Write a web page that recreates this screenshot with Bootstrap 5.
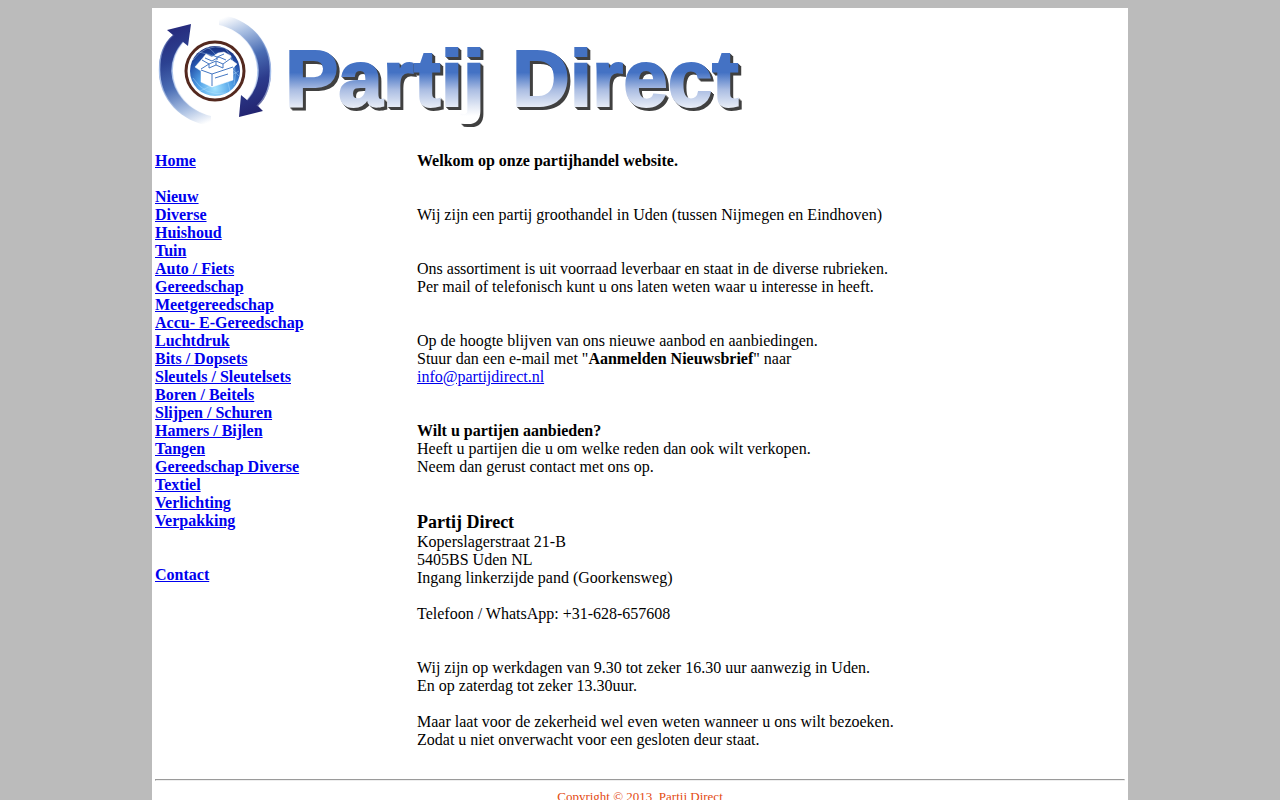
<!DOCTYPE html>
<html lang="nl">
<head>
<meta charset="utf-8">
<meta name="viewport" content="width=device-width, initial-scale=1">
<title>Partij Direct</title>
<link href="https://cdn.jsdelivr.net/npm/bootstrap@5.3.0/dist/css/bootstrap.min.css" rel="stylesheet">
<style>
body { background: #bbb; color: #000; font: 16px/18px "Liberation Serif", "Times New Roman", serif; }
a { color: #00e; }
.sheet { max-width: 976px; padding: 3px; }
.logo { width: 600px; max-width: 100%; height: auto; }
.side { width: 262px; }
.gap-line { margin-bottom: 18px; }
.gap-lines { margin-bottom: 36px; }
.firm { font-size: 18px; line-height: 21px; font-weight: bold; }
.rule { border: 1px solid; border-color: #9a9a9a #eee #eee #9a9a9a; opacity: 1; margin: 30px 0 8px; }
.copy { color: #e34a12; font-size: 13px; line-height: 15px; padding-bottom: 12px; }
.word { font: bold 80px "Liberation Sans", Arial, sans-serif; filter: drop-shadow(1px 1px 0 #404040) drop-shadow(2px 2px 0 #404040); }
</style>
</head>
<body>
<main class="sheet container-fluid bg-white mt-2">
<header>
<svg class="logo d-block" viewBox="155 11 600 141" role="img" aria-label="Partij Direct">
  <defs>
    <linearGradient id="face" gradientUnits="userSpaceOnUse" x1="0" y1="46" x2="0" y2="116">
      <stop offset="0" stop-color="#4472c4"/><stop offset=".38" stop-color="#4472c4"/>
      <stop offset=".62" stop-color="#a9bce2"/><stop offset=".86" stop-color="#e3e9f5"/><stop offset="1" stop-color="#fff"/>
    </linearGradient>
    <linearGradient id="up" gradientUnits="userSpaceOnUse" x1="172" y1="28" x2="210" y2="122">
      <stop offset="0" stop-color="#262a7c"/><stop offset=".3" stop-color="#2c4292"/><stop offset=".55" stop-color="#4a6db4"/><stop offset=".8" stop-color="#a9bfe2"/><stop offset="1" stop-color="#fff"/>
    </linearGradient>
    <linearGradient id="down" gradientUnits="userSpaceOnUse" x1="258" y1="113" x2="220" y2="19">
      <stop offset="0" stop-color="#22236f"/><stop offset=".3" stop-color="#2c3b8c"/><stop offset=".55" stop-color="#4a6db4"/><stop offset=".8" stop-color="#a9bfe2"/><stop offset="1" stop-color="#fff"/>
    </linearGradient>
    <linearGradient id="shine" gradientUnits="userSpaceOnUse" x1="0" y1="28" x2="0" y2="118">
      <stop offset="0" stop-color="#8fabe0" stop-opacity="0"/><stop offset=".5" stop-color="#a9c3ee"/><stop offset="1" stop-color="#fff" stop-opacity="0"/>
    </linearGradient>
    <radialGradient id="globe" cx=".5" cy=".85" r=".85">
      <stop offset="0" stop-color="#a5e4ff"/><stop offset=".4" stop-color="#4f9fe6"/><stop offset=".75" stop-color="#2451aa"/><stop offset="1" stop-color="#172b78"/>
    </radialGradient>
  </defs>
  <path fill="url(#up)" d="M191 24L167 30L173 35C163 43 159 56 159 70C159 99 181 122 211 126V116C190 111 173 94 172 71C172 58 177 49 183 42L188 46Z"/>
  <path fill="url(#down)" d="M239 117L263 111L258 106C267 98 271 85 271 71C271 42 249 17 219 15V25C242 30 257 48 258 70C258 83 254 92 247 100L241 95Z"/>
  <g fill="none" stroke="url(#shine)" stroke-width="1.5">
    <path d="M211 116C190 111 173 94 172 71C172 58 177 49 183 42M174 35C163 43 159.500 56 159.500 70C159.500 99 181 122 211 126"/>
    <path d="M219 25C242 30 257 48 258 70C258 83 254 92 247 100M257 106C266 98 270.500 85 270.500 71C270.500 42 249 17 219 15"/>
  </g>
  <circle cx="215" cy="71" r="29" fill="#fff" stroke="#54291f" stroke-width="3"/>
  <circle cx="215" cy="71" r="25" fill="url(#globe)"/>
  <g fill="none" stroke="#bfe4ff" stroke-width=".6" opacity=".65">
    <path d="M193 60Q205 43 225 48Q239 63 234 85M199 52Q220 55 239 76M200 91Q216 84 239 71M193 78Q205 97 226 93M207 47Q222 55 230 91"/>
  </g>
  <path fill="#fff" stroke="#fff" stroke-width=".5" d="M195 67L201 71V82L212 87L233 80V68L237 64L230 59L231 56L224 52L218 53L212 57L206 54L202 59Z"/>
  <g fill="none" stroke="#4477c2" stroke-width="1">
    <path d="M201 70L212 74L233 67M212 74V86M202 60L209 64L216 61L223 64L230 59M205 58L212 61L219 57L226 60M209 64V68L216 65V61M216 65L223 68V64M212 55L217 57L224 54M217 57V60M201 69L209 64M215 78L228 74"/>
  </g>
  <g class="word" fill="url(#face)" stroke="url(#face)" stroke-width="2">
    <text x="285" y="106">Partij</text><text x="512" y="106">Direct</text>
  </g>
</svg>
</header>
<div class="d-flex">
<nav class="side flex-shrink-0 fw-bold d-flex flex-column align-items-start">
<a href="#" class="gap-line">Home</a>
<a href="#">Nieuw</a>
<a href="#">Diverse</a>
<a href="#">Huishoud</a>
<a href="#">Tuin</a>
<a href="#">Auto / Fiets</a>
<a href="#">Gereedschap</a>
<a href="#">Meetgereedschap</a>
<a href="#">Accu- E-Gereedschap</a>
<a href="#">Luchtdruk</a>
<a href="#">Bits / Dopsets</a>
<a href="#">Sleutels / Sleutelsets</a>
<a href="#">Boren / Beitels</a>
<a href="#">Slijpen / Schuren</a>
<a href="#">Hamers / Bijlen</a>
<a href="#">Tangen</a>
<a href="#">Gereedschap Diverse</a>
<a href="#">Textiel</a>
<a href="#">Verlichting</a>
<a href="#" class="gap-lines">Verpakking</a>
<a href="#">Contact</a>
</nav>
<article>
<p class="gap-lines fw-bold">Welkom op onze partijhandel website.</p>
<p class="gap-lines">Wij zijn een partij groothandel in Uden (tussen Nijmegen en Eindhoven)</p>
<p class="gap-lines">Ons assortiment is uit voorraad leverbaar en staat in de diverse rubrieken.<br>Per mail of telefonisch kunt u ons laten weten waar u interesse in heeft.</p>
<p class="gap-lines">Op de hoogte blijven van ons nieuwe aanbod en aanbiedingen.<br>Stuur dan een e-mail met "<b>Aanmelden Nieuwsbrief</b>" naar<br><a href="mailto:info@partijdirect.nl">info@partijdirect.nl</a></p>
<p class="gap-lines"><b>Wilt u partijen aanbieden?</b><br>Heeft u partijen die u om welke reden dan ook wilt verkopen.<br>Neem dan gerust contact met ons op.</p>
<h2 class="firm mb-0">Partij Direct</h2>
<p class="gap-line">Koperslagerstraat 21-B<br>5405BS Uden NL<br>Ingang linkerzijde pand (Goorkensweg)</p>
<p class="gap-lines">Telefoon / WhatsApp: +31-628-657608</p>
<p class="gap-line">Wij zijn op werkdagen van 9.30 tot zeker 16.30 uur aanwezig in Uden.<br>En op zaterdag tot zeker 13.30uur.</p>
<p class="mb-0">Maar laat voor de zekerheid wel even weten wanneer u ons wilt bezoeken.<br>Zodat u niet onverwacht voor een gesloten deur staat.</p>
</article>
</div>
<hr class="rule">
<footer class="copy text-center">Copyright © 2013&nbsp; Partij Direct</footer>
</main>
<script src="https://cdn.jsdelivr.net/npm/bootstrap@5.3.0/dist/js/bootstrap.bundle.min.js"></script>
</body>
</html>
